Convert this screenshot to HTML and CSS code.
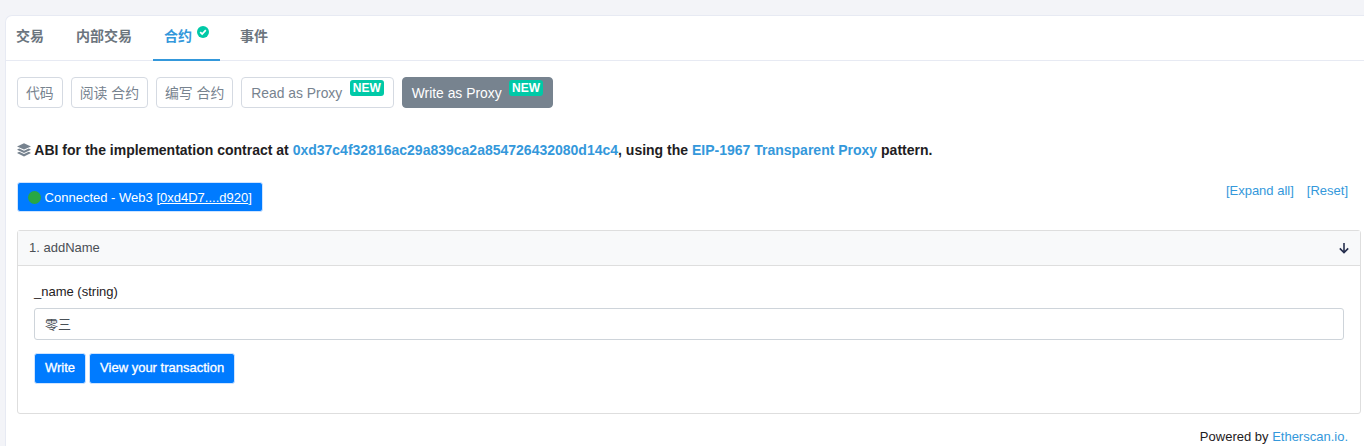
FILE: index.html
```html
<!DOCTYPE html>
<html lang="zh">
<head>
<meta charset="utf-8">
<title>Contract</title>
<link rel="stylesheet" href="styles.css">
</head>
<body>
<main class="card">
  <nav class="tabs">
    <a class="tab">交易</a>
    <a class="tab">内部交易</a>
    <a class="tab active">合约<svg class="check" viewBox="0 0 12 12"><circle cx="6" cy="6" r="6" fill="#00c9a7"/><path d="M3.2 6.1 5.2 8.1l3.6-3.9" fill="none" stroke="#fff" stroke-width="1.7"/></svg></a>
    <a class="tab">事件</a>
  </nav>
  <section class="body">
    <div class="pills">
      <a class="pill">代码</a>
      <a class="pill">阅读 合约</a>
      <a class="pill">编写 合约</a>
      <a class="pill wide">Read as Proxy<span class="new">NEW</span></a>
      <a class="pill wide on">Write as Proxy<span class="new">NEW</span></a>
    </div>
    <p class="abi"><svg class="layers" viewBox="0 0 14 14"><path d="M7 .2 14 3.4 7 6.6 0 3.4Z" fill="#77838f"/><path d="M2.2 5.5 0 6.7 7 10 14 6.7 11.8 5.5 7 7.8Z" fill="#77838f"/><path d="M2.2 8.8 0 10 7 13.6 14 10 11.8 8.8 7 11.1Z" fill="#77838f"/></svg> ABI for the implementation contract at <a>0xd37c4f32816ac29a839ca2a854726432080d14c4</a>, using the <a>EIP-1967 Transparent Proxy</a> pattern.</p>
    <div class="bar">
      <button class="connected"><i class="dot"></i> Connected - Web3 [<u>0xd4D7....d920</u>]</button>
      <div class="links"><a>[Expand all]</a><a>[Reset]</a></div>
    </div>
    <div class="panel">
      <div class="panel-head"><span>1. addName</span><svg class="arrow" viewBox="0 0 12 12"><path d="M6 1v9.4M1.8 6.4 6 10.6l4.2-4.2" fill="none" stroke="#27304f" stroke-width="1.6"/></svg></div>
      <div class="panel-body">
        <label class="label">_name (string)</label>
        <div class="input">零三</div>
        <div class="actions">
          <button class="btn">Write</button>
          <button class="btn">View your transaction</button>
        </div>
      </div>
    </div>
    <p class="powered">Powered by <a>Etherscan.io.</a></p>
  </section>
</main>
</body>
</html>
```
FILE: styles.css
```css
* { box-sizing: border-box; }
html, body { margin: 0; height: 100%; overflow: hidden; }
body {
  background: #f3f4f8;
  padding: 15px 0 0 5px;
  font-family: "Liberation Sans", "Noto Sans CJK SC", sans-serif;
  font-size: 14px;
  color: #1e2022;
}
a { color: #3498db; text-decoration: none; }
.card {
  background: #fff;
  border-top-left-radius: 7px;
  border: 1px solid #e7eaf3;
  border-width: 1px 0 0 1px;
  height: 445px;
  overflow: hidden;
}
.tabs {
  display: flex;
  height: 45px;
  border-bottom: 1px solid #e7eaf3;
}
.tab {
  display: flex;
  align-items: flex-start;
  padding: 12px 12px 0;
  margin-right: 8px;
  font-weight: 700;
  font-size: 14px;
  line-height: 16px;
  color: #6c757e;
  height: 45px;
}
.tab:first-child { padding-left: 10px; }
.active {
  color: #3498db;
  border-bottom: 2px solid #3498db;
  margin-left: 1px;
  padding-left: 11px;
  padding-right: 11px;
}
.check { flex: none; width: 12px; height: 12px; margin: -2px 0 0 5px; }
.body { padding: 16px 3px 0 11px; }
.pills { display: flex; gap: 8px; height: 31px; }
.pill {
  display: flex;
  align-items: center;
  border: 1px solid #d5dae2;
  border-radius: 4px;
  padding: 0 8px 2px;
  color: #77838f;
  font-size: 13.875px;
  white-space: nowrap;
}
.wide { padding: 0 9px; }
.on { background: #77838f; border-color: #77838f; color: #fff; }
.new {
  background: #00c9a7;
  color: #fff;
  font-size: 12px;
  font-weight: 700;
  line-height: 16px;
  border-radius: 3px;
  padding: 0 3px;
  margin: -9px 0 0 7.5px;
}
.abi {
  margin: 33px 0 0;
  font-size: 14px;
  font-weight: 700;
  line-height: 18px;
  color: #1e2022;
  white-space: nowrap;
}
.layers { width: 14px; height: 14px; vertical-align: -2px; }
.bar {
  display: flex;
  justify-content: space-between;
  margin-top: 23px;
  padding-right: 13px;
}
.connected {
  height: 30px;
  background: #007bff;
  color: #fff;
  border: 1px solid #cfe4ff;
  border-radius: 3px;
  padding: 0 10px;
  font: 13px "Liberation Sans", sans-serif;
}
.dot {
  display: inline-block;
  width: 13px;
  height: 13px;
  border-radius: 50%;
  background: #28a745;
  vertical-align: -2px;
}
.links { display: flex; gap: 13px; font-size: 13px; line-height: 18px; }
.panel {
  margin-top: 18px;
  border: 1px solid #dedede;
  border-radius: 3px;
  height: 184px;
}
.panel-head {
  display: flex;
  justify-content: space-between;
  align-items: center;
  height: 35px;
  padding: 0 10px 2px 11px;
  background: #f8f9fa;
  border-bottom: 1px solid #dedede;
  font-size: 13px;
  color: #4a4f55;
}
.arrow { width: 12px; height: 12px; margin-top: 2px; }
.panel-body { padding: 17px 16px; }
.label { display: block; font-size: 13px; line-height: 18px; color: #1e2022; }
.input {
  margin-top: 7px;
  height: 32px;
  border: 1px solid #ced4da;
  border-radius: 3px;
  padding: 0 10px 2px;
  display: flex;
  align-items: center;
  font-size: 13px;
  color: #495057;
}
.actions { display: flex; gap: 3px; margin-top: 13px; }
.btn {
  height: 31px;
  background: #007bff;
  color: #fff;
  border: 1px solid #cfe4ff;
  border-radius: 3px;
  padding: 0 10px 2px;
  font: 13px "Liberation Sans", sans-serif;
  -webkit-text-stroke: .3px #fff;
}
.powered { margin: 15px 13px 0 0; text-align: right; font-size: 13px; line-height: 15px; }
```
